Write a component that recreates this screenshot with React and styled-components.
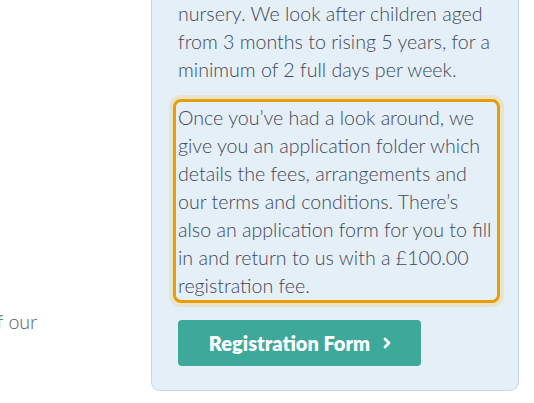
import React from "react";
import styled, { createGlobalStyle } from "styled-components";

const GlobalStyle = createGlobalStyle`
  html, body {
    margin: 0;
    padding: 0;
    background: #ffffff;
    overflow: hidden;
  }
  body {
    font-family: Lato, "Open Sans", sans-serif;
  }
`;

const Page = styled.div`
  display: flex;
  align-items: flex-start;
  width: 534px;
  height: 403px;
`;

const LeftColumn = styled.div`
  width: 151px;
  flex-shrink: 0;
  overflow: hidden;
  padding-top: 308px;
`;

const LeftText = styled.p`
  margin: 0 0 0 -14px;
  font-size: 19.6px;
  font-weight: 300;
  line-height: 28px;
  color: #565d68;
  white-space: nowrap;
`;

const Panel = styled.aside`
  background: #e5eff8;
  border: 1px solid #c3d8ea;
  border-top: none;
  border-radius: 0 0 9px 9px;
  padding: 0 18px 24px 26px;
  width: 322px;
`;

const Text = styled.p`
  margin: 0;
  font-size: 19.6px;
  font-weight: 300;
  line-height: 28px;
  color: #414857;
`;

const Highlight = styled.div`
  margin: 15px 0 0 -5px;
  padding: 2px 4px 0 2px;
  border: 3px solid #e89e00;
  border-radius: 8px;
  box-shadow: 0 0 0 4px #e7e3cc;
`;

const Button = styled.a`
  margin-top: 17px;
  display: inline-flex;
  align-items: center;
  justify-content: center;
  gap: 12px;
  width: 243px;
  height: 46px;
  background: #3ea89a;
  border-radius: 4px;
  color: #ffffff;
  font-weight: 800;
  font-size: 20px;
  text-decoration: none;
  padding-left: 2px;
  box-sizing: border-box;
`;

const Chevron = () => (
  <svg width="10" height="12" viewBox="0 0 10 12">
    <path d="M3 2 L7 6 L3 10" fill="none" stroke="#fff" strokeWidth="2.8" strokeLinecap="round" strokeLinejoin="round" />
  </svg>
);

export default function App() {
  return (
    <>
      <GlobalStyle />
      <Page>
        <LeftColumn>
          <LeftText>of our</LeftText>
        </LeftColumn>
        <Panel>
          <Text>
            nursery. We look after children aged from 3 months to rising 5 years, for a minimum of 2 full days per week.
          </Text>
          <Highlight>
            <Text>
              Once you’ve had a look around, we give you an application folder which details the fees, arrangements and our terms and conditions. There’s also an application form for you to fill in and return to us with a £100.00 registration fee.
            </Text>
          </Highlight>
          <Button href="#">
            Registration Form <Chevron />
          </Button>
        </Panel>
      </Page>
    </>
  );
}
